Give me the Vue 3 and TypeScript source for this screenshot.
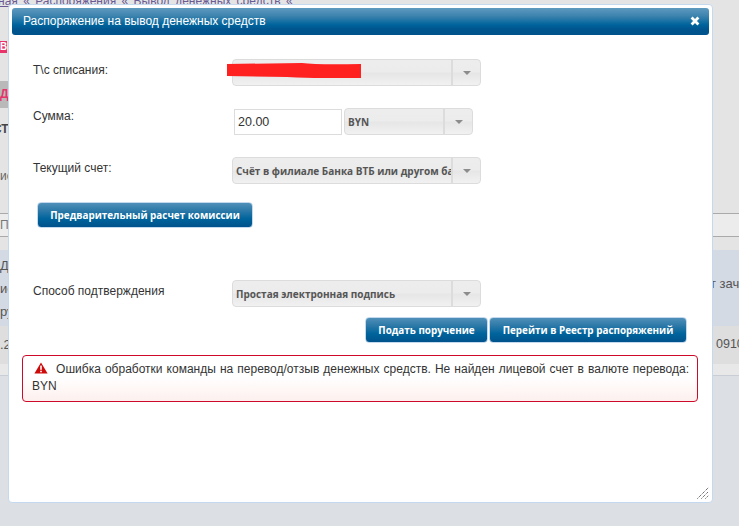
<script setup lang="ts">
const title = "Распоряжение на вывод денежных средств";
const errorText =
  "Ошибка обработки команды на перевод/отзыв денежных средств. Не найден лицевой счет в валюте перевода: BYN";
</script>

<template>
  <div class="page">
    <div class="crumbs"><u>ная</u> « <u>Распоряжения</u> « <u>Вывод денежных средств</u> «</div>
    <div class="band top">
      <div class="pink-tag">В</div>
      <div class="gray-tag"><span>Д</span></div>
      <div class="side-text st">СТ</div>
      <div class="side-text is">ис</div>
      <div class="lined">По</div>
    </div>
    <div class="band blue">
      <span>Д</span>
      <span>ис</span>
      <span>ру</span>
      <em>т зачи</em>
    </div>
    <div class="band grey"><span>.2</span><em>0910</em></div>
    <div class="band pale"></div>
    <div class="band rest"></div>

    <div class="modal">
      <header class="titlebar">
        <span class="title">{{ title }}</span>
        <svg class="close" width="10" height="10" viewBox="0 0 10 10">
          <path d="M1.6 1.6 8.4 8.4M8.4 1.6 1.6 8.4" stroke="#fff" stroke-width="2.8" fill="none" />
        </svg>
      </header>

      <div class="form">
        <div class="row first">
          <label>Т\с списания:</label>
          <div class="select wide">
            <div class="value"></div>
            <div class="arrow"><i></i></div>
            <svg class="scribble" width="134" height="16" viewBox="0 0 134 16">
              <path d="M0 1 L75 0 Q90 2 134 1 V15 H95 Q80 15 60 14 L0 13 Z" fill="#ff2020" />
            </svg>
          </div>
        </div>

        <div class="row amount">
          <label>Сумма:</label>
          <input class="sum" value="20.00" />
          <div class="select currency">
            <div class="value">BYN</div>
            <div class="arrow"><i></i></div>
          </div>
        </div>

        <div class="row third">
          <label>Текущий счет:</label>
          <div class="select wide">
            <div class="value">Счёт в филиале Банка ВТБ или другом банке</div>
            <div class="arrow"><i></i></div>
          </div>
        </div>

        <button class="btn calc">Предварительный расчет комиссии</button>

        <div class="row confirm">
          <label>Способ подтверждения</label>
          <div class="select wide">
            <div class="value">Простая электронная подпись</div>
            <div class="arrow"><i></i></div>
          </div>
        </div>

        <div class="actions">
          <button class="btn submit">Подать поручение</button>
          <button class="btn registry">Перейти в Реестр распоряжений</button>
        </div>
      </div>

      <div class="error">
        <svg class="warn" width="14" height="12" viewBox="0 0 14 12">
          <path d="M7 0.5 13.6 11.5H0.4Z" fill="#cd0a0a" />
          <rect x="6.2" y="3.6" width="1.6" height="4.2" fill="#fff" />
          <rect x="6.2" y="8.7" width="1.6" height="1.6" fill="#fff" />
        </svg>
        {{ errorText }}
      </div>

      <svg class="grip" width="12" height="12" viewBox="0 0 12 12">
        <path d="M0.5 11.5 11.5 0.5M4.5 11.5 11.5 4.5M8.5 11.5 11.5 8.5" stroke="#333" stroke-width="1" stroke-dasharray="1 1" fill="none" />
      </svg>
    </div>
  </div>
</template>

<style>
html,
body {
  margin: 0;
  background: #dcdfe3;
}
</style>

<style scoped>
.page {
  position: relative;
  width: 739px;
  height: 526px;
  overflow: hidden;
  display: flex;
  flex-direction: column;
  background: #dcdfe3;
  font-family: "Liberation Sans", Arial, sans-serif;
  color: #555;
}

.crumbs {
  position: absolute;
  top: -7px;
  left: -2px;
  font-size: 12px;
  line-height: 16px;
  color: #6b5b95;
  white-space: pre;
  word-spacing: 2px;
  z-index: 1;
}

.band {
  flex: none;
  width: 100%;
}

.band.top {
  height: 250px;
  background: #e4e4e4;
  display: flex;
  flex-direction: column;
}

.pink-tag {
  margin-top: 41px;
  width: 7px;
  height: 12px;
  background: #e8336b;
  color: #fff;
  font-size: 10px;
  line-height: 12px;
  font-weight: 700;
  overflow: hidden;
}

.gray-tag {
  margin-top: 28px;
  width: 8px;
  height: 27px;
  background: #b9b9b9;
  color: #e8336b;
  font-size: 12px;
  font-weight: 700;
  line-height: 27px;
  overflow: hidden;
}

.side-text {
  font-size: 12px;
  line-height: 14px;
  color: #444;
  width: 8px;
  overflow: hidden;
  white-space: nowrap;
}

.side-text.st {
  margin-top: 14px;
  font-weight: 700;
  text-indent: -7px;
}

.side-text.is {
  margin-top: 33px;
  color: #666;
}

.lined {
  margin-top: 30px;
  height: 22px;
  line-height: 22px;
  font-size: 12px;
  border-top: 1px solid #aaa;
  border-bottom: 1px solid #aaa;
  background: #ececec;
  color: #777;
}

.band.blue {
  position: relative;
  height: 76px;
  background: #d3dae4;
  display: flex;
  flex-direction: column;
  gap: 8px;
  padding-top: 8px;
  box-sizing: border-box;
  font-size: 13px;
  line-height: 15px;
  color: #555;
}

.band.blue em {
  position: absolute;
  left: 710px;
  top: 26px;
  font-style: normal;
  white-space: nowrap;
}

.band.grey {
  position: relative;
  height: 38px;
  background: #dedede;
  font-size: 13px;
  line-height: 37px;
  color: #555;
}

.band.grey em {
  position: absolute;
  left: 716px;
  top: 0;
  font-size: 12.5px;
  font-style: normal;
}

.band.pale {
  height: 12px;
  background: #e8e8e8;
  border-bottom: 1px solid #c9ced6;
  box-sizing: border-box;
}

.band.rest {
  flex: 1;
  background: #dcdfe3;
}

.modal {
  position: absolute;
  left: 8px;
  top: 4px;
  width: 705px;
  height: 499px;
  box-sizing: border-box;
  padding: 3px;
  background: #fff;
  border: 1px solid #c5d9ee;
  border-radius: 4px;
  z-index: 2;
}

.titlebar {
  display: flex;
  align-items: center;
  justify-content: space-between;
  height: 27px;
  box-sizing: border-box;
  padding: 0 9px 0 11px;
  border-radius: 3px;
  background: linear-gradient(#5f9ac0 0%, #3c83ae 30%, #00649c 62%, #00558f 78%, #00528c 100%);
  color: #fff;
  font-size: 12px;
}

.title {
  margin-bottom: 2px;
}

.close {
  display: block;
  margin-bottom: 1px;
}

.form {
  display: flex;
  flex-direction: column;
  color: #333;
}

.row {
  display: flex;
  align-items: flex-start;
  font-size: 12px;
}

.row label {
  width: 199px;
  flex: none;
  margin-left: 21px;
  line-height: 14px;
  color: #333;
}

.row.first {
  margin-top: 24px;
}

.row.first label {
  padding-top: 4px;
}

.row.amount {
  margin-top: 22px;
}

.row.amount label {
  padding-top: 1px;
}

.row.third {
  margin-top: 22px;
}

.row.third label {
  padding-top: 4px;
}

.row.confirm {
  margin-top: 52px;
}

.row.confirm label {
  padding-top: 4px;
}

.select {
  position: relative;
  display: flex;
  height: 27px;
  box-sizing: border-box;
  border: 1px solid #dcdcdc;
  border-radius: 4px;
  background: linear-gradient(#ededed 0%, #ececec 48%, #e6e6e6 52%, #f1f1f1 100%);
  font-family: "Open Sans", sans-serif;
  font-size: 10px;
  font-weight: 700;
  color: #555;
}

.select.wide {
  width: 249px;
}

.select.currency {
  width: 129px;
  margin-left: 2px;
}

.value {
  flex: 1;
  min-width: 0;
  overflow: hidden;
  white-space: nowrap;
  padding-left: 3px;
  line-height: 26px;
  border-right: 2px solid #dcdcdc;
}

.arrow {
  width: 27px;
  flex: none;
  display: flex;
  align-items: center;
  justify-content: center;
}

.arrow i {
  display: block;
  width: 0;
  height: 0;
  border-left: 4px solid transparent;
  border-right: 4px solid transparent;
  border-top: 4px solid #8c8c8c;
}

.scribble {
  position: absolute;
  left: -6px;
  top: 3px;
}

.sum {
  width: 108px;
  height: 26px;
  box-sizing: border-box;
  margin: 1px 0 0 2px;
  padding: 0 3px;
  border: 1px solid #dcdcdc;
  background: #fff;
  font-family: "Liberation Sans", Arial, sans-serif;
  font-size: 12.5px;
  color: #333;
  outline: none;
}

.btn {
  height: 26px;
  box-sizing: border-box;
  padding: 0;
  border: 1px solid #c5d9ee;
  border-radius: 4px;
  background: linear-gradient(#4f90b9 0%, #2f7aa9 30%, #00649c 65%, #00528c 100%);
  color: #fff;
  font-family: "Open Sans", sans-serif;
  font-size: 9.9px;
  font-weight: 700;
}

.btn.calc {
  width: 216px;
  margin: 18px 0 0 25px;
}

.actions {
  display: flex;
  justify-content: flex-end;
  gap: 1px;
  margin: 10px 22px 0 0;
}

.btn.submit {
  width: 123px;
}

.btn.registry {
  width: 198px;
}

.error {
  position: relative;
  margin: 12px 11px 0 10px;
  height: 47px;
  box-sizing: border-box;
  padding: 5px 8px 0 9px;
  border: 1px solid #cd0a2a;
  border-radius: 4px;
  background: linear-gradient(#fff 0%, #fff 45%, #fdf0ee 100%);
  color: #333;
  font-size: 12px;
  line-height: 17px;
  text-align: justify;
}

.warn {
  display: inline-block;
  vertical-align: -1px;
  margin: 0 4px 0 2px;
}

.grip {
  position: absolute;
  right: 3px;
  bottom: 3px;
}
</style>
